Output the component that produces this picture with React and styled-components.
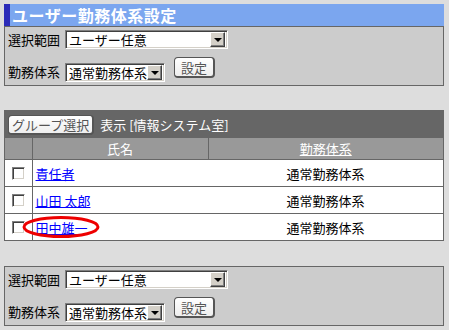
import React from 'react';
import styled, { createGlobalStyle } from 'styled-components';

const GlobalStyle = createGlobalStyle`
  body {
    margin: 0;
    background: #dddddd;
    font-family: "Noto Sans CJK JP", "Noto Sans", sans-serif;
    font-size: 13px;
    color: #000;
  }
`;

const Page = styled.div`
  width: 440px;
  padding: 4px 5px 0 4px;
`;

const TitleBar = styled.h1`
  margin: 0;
  height: 22px;
  line-height: 22px;
  background: #7ba6ef;
  border-left: 6px solid #2b2bb8;
  color: #fff;
  font-size: 16px;
  font-weight: bold;
  padding-left: 2px;
  letter-spacing: 0.5px;
`;

const Panel = styled.div`
  box-sizing: border-box;
  background: #cccccc;
  border: 1px solid #666;
  padding: 3px 3px;
  display: flex;
  flex-direction: column;
  gap: 8px;
  margin-top: ${(p) => p.$gap || 0}px;
`;

const FieldRow = styled.div`
  display: flex;
  align-items: ${(p) => (p.$bottom ? 'flex-end' : 'center')};
`;

const Label = styled.span`
  font-size: 13px;
  line-height: 17px;
  margin-right: 5px;
  margin-bottom: ${(p) => (p.$bottom ? 2 : 0)}px;
`;

const SelectBox = styled.div`
  box-sizing: border-box;
  width: ${(p) => p.$width}px;
  height: 19px;
  background: #fff;
  border: 1px solid;
  border-color: #808080 #fff #fff #808080;
  box-shadow: inset 1px 1px 0 #404040, inset -1px -1px 0 #d4d0c8;
  display: flex;
  align-items: center;
  padding: 2px 2px 2px 3px;
`;

const SelectValue = styled.span`
  flex: 1;
  min-width: 0;
  font-size: 13px;
  line-height: 17px;
  white-space: nowrap;
`;

const DropButton = styled.span`
  box-sizing: border-box;
  flex: none;
  width: 15px;
  height: 15px;
  background: #d4d0c8;
  border: 1px solid;
  border-color: #fff #404040 #404040 #fff;
  box-shadow: inset -1px -1px 0 #808080;
  display: flex;
  align-items: center;
  justify-content: center;

  &::after {
    content: '';
    border-left: 4px solid transparent;
    border-right: 4px solid transparent;
    border-top: 4px solid #000;
    margin-top: 1px;
  }
`;

const PlainButton = styled.button`
  box-sizing: border-box;
  height: ${(p) => p.$height || 21}px;
  padding: 0 ${(p) => p.$pad || 6}px;
  margin-left: ${(p) => p.$left || 0}px;
  margin-bottom: ${(p) => p.$lift || 0}px;
  background: linear-gradient(#ffffff, #eeeeee);
  border: 1px solid #555;
  border-right-width: 2px;
  border-bottom-width: 2px;
  border-radius: 4px;
  font-family: inherit;
  font-size: 13px;
  line-height: 15px;
  color: #555;
  cursor: pointer;
`;

const Select = ({ value, width }) => (
  <SelectBox $width={width}>
    <SelectValue>{value}</SelectValue>
    <DropButton />
  </SelectBox>
);

const SettingsPanel = ({ gap }) => (
  <Panel $gap={gap}>
    <FieldRow>
      <Label>選択範囲</Label>
      <Select value="ユーザー任意" width={163} />
    </FieldRow>
    <FieldRow $bottom>
      <Label $bottom>勤務体系</Label>
      <Select value="通常勤務体系" width={100} />
      <PlainButton $left={9} $lift={4}>設定</PlainButton>
    </FieldRow>
  </Panel>
);

const TableBox = styled.div`
  box-sizing: border-box;
  margin-top: 24px;
  border: 1px solid #666;
  background: #fff;
`;

const Toolbar = styled.div`
  height: 27px;
  background: #666666;
  display: flex;
  align-items: center;
  gap: 6px;
  padding-left: 3px;
  color: #fff;
  font-size: 13px;
`;

const Grid = styled.table`
  width: 100%;
  border-collapse: collapse;
  table-layout: fixed;
`;

const HeadCell = styled.th`
  height: 21px;
  padding: 0;
  background: #999999;
  color: #fff;
  font-weight: normal;
  font-size: 13px;
  line-height: 15px;
  border-left: ${(p) => (p.$first ? 'none' : '1px solid #666')};
  text-align: center;
`;

const HeadLink = styled.a`
  color: #fff;
  text-decoration: underline;
`;

const Cell = styled.td`
  height: 26px;
  padding: 0 0 0 ${(p) => p.$pad || 0}px;
  border-top: 1px solid #666;
  border-right: ${(p) => (p.$divider ? '1px solid #666' : 'none')};
  text-align: ${(p) => p.$align || 'left'};
  font-size: 13px;
  line-height: 15px;
`;

const NameCell = styled(Cell)`
  position: relative;
`;

const Check = styled.input`
  appearance: none;
  box-sizing: border-box;
  display: block;
  width: 13px;
  height: 13px;
  margin: 0 0 0 7px;
  background: #fff;
  border: 1px solid;
  border-color: #808080 #fff #fff #808080;
  box-shadow: inset 1px 1px 0 #404040, inset -1px -1px 0 #d4d0c8;
`;

const NameLink = styled.a`
  color: #0000ff;
  text-decoration: underline;
`;

const Highlight = styled.svg`
  position: absolute;
  left: -11px;
  top: 2px;
  pointer-events: none;
  overflow: visible;
`;

const users = [
  { name: '責任者', plan: '通常勤務体系' },
  { name: '山田 太郎', plan: '通常勤務体系' },
  { name: '田中雄一', plan: '通常勤務体系', marked: true },
];

export default function App() {
  return (
    <Page>
      <GlobalStyle />
      <TitleBar>ユーザー勤務体系設定</TitleBar>
      <SettingsPanel />

      <TableBox>
        <Toolbar>
          <PlainButton $height={20} $pad={3}>グループ選択</PlainButton>
          <span>表示 [情報システム室]</span>
        </Toolbar>
        <Grid>
          <colgroup>
            <col style={{ width: 27 }} />
            <col style={{ width: 176 }} />
            <col />
          </colgroup>
          <thead>
            <tr>
              <HeadCell $first />
              <HeadCell>氏名</HeadCell>
              <HeadCell>
                <HeadLink href="#">勤務体系</HeadLink>
              </HeadCell>
            </tr>
          </thead>
          <tbody>
            {users.map((u) => (
              <tr key={u.name}>
                <Cell $divider>
                  <Check type="checkbox" />
                </Cell>
                <NameCell $pad={3}>
                  <NameLink href="#">{u.name}</NameLink>
                  {u.marked && (
                    <Highlight width="78" height="22" viewBox="0 0 78 22">
                      <ellipse cx="39" cy="11" rx="37" ry="9.5" fill="none" stroke="#ee0000" strokeWidth="3" />
                    </Highlight>
                  )}
                </NameCell>
                <Cell $align="center">{u.plan}</Cell>
              </tr>
            ))}
          </tbody>
        </Grid>
      </TableBox>

      <SettingsPanel gap={25} />
    </Page>
  );
}
